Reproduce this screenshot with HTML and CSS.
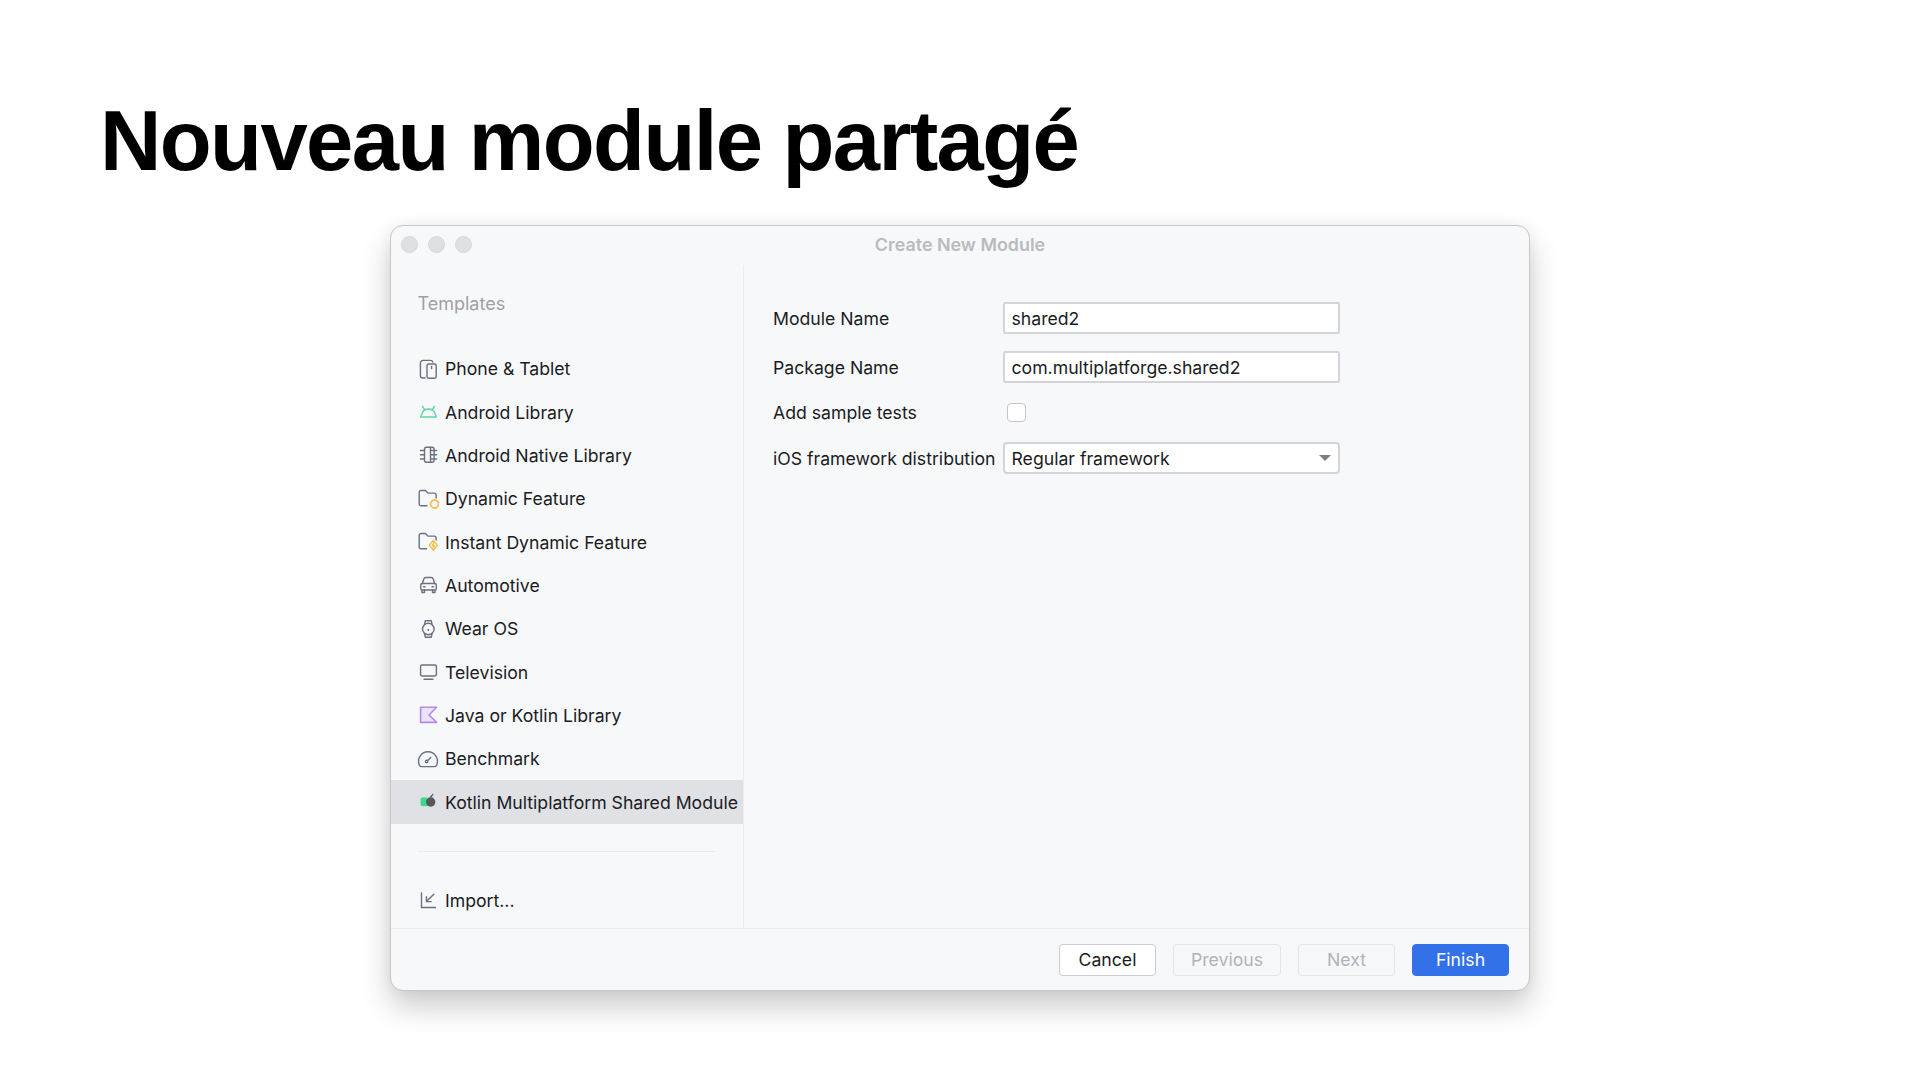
FILE: index.html
```html
<!DOCTYPE html>
<html lang="fr">
<head>
<meta charset="utf-8">
<title>Nouveau module partagé</title>
<link rel="stylesheet" href="styles.css">
</head>
<body>
<h1 class="headline">Nouveau module partagé</h1>
<section class="window">
  <header class="titlebar">
    <div class="lights"><span class="light"></span><span class="light"></span><span class="light"></span></div>
    <div class="window-title">Create New Module</div>
  </header>
  <div class="content">
    <aside class="sidebar">
      <div class="side-heading">Templates</div>
      <ul class="list">
        <li class="item"><svg class="icon" viewBox="0 0 22 22"><path class="st" d="M8 20H6a2.6 2.6 0 0 1-2.6-2.6V5A2.6 2.6 0 0 1 6 2.4h7.5a2.5 2.5 0 0 1 2.3 1.6"/><rect class="st" x="10" y="6" width="9.2" height="14.2" rx="1.6"/><path class="st" d="M14.6 8.5v2"/></svg>Phone &amp; Tablet</li>
        <li class="item"><svg class="icon" viewBox="0 0 22 22"><path class="gr" d="M3.6 16h15.8l-1.2-3a7 7 0 0 0-13.4 0z"/><path class="gr" d="M5.5 5.5l2.6 3.6M17.5 5.5l-2.6 3.6"/></svg>Android Library</li>
        <li class="item"><svg class="icon" viewBox="0 0 22 22"><rect class="st" x="7.5" y="3.2" width="9.6" height="15" rx="2"/><path class="st" d="M3.5 6.5h4M3.5 10.7h4M3.5 15h4M13.5 6.5h6M13.5 10.7h6M13.5 15h6M13.5 3.5v14.5"/></svg>Android Native Library</li>
        <li class="item"><svg class="icon" viewBox="0 0 22 22"><path class="st" d="M10 17.8H4a1.8 1.8 0 0 1-1.8-1.8V4.3A1.8 1.8 0 0 1 4 2.5h4.5l2.4 2.6h6.4a1.8 1.8 0 0 1 1.8 1.8V10"/><circle class="yl dash" cx="17.6" cy="16" r="4"/></svg>Dynamic Feature</li>
        <li class="item"><svg class="icon" viewBox="0 0 22 22"><path class="st" d="M9.5 17.8H4a1.8 1.8 0 0 1-1.8-1.8V4.3A1.8 1.8 0 0 1 4 2.5h4.5l2.4 2.6h6.4a1.8 1.8 0 0 1 1.8 1.8V9"/><path class="yl" d="M16.3 9.5l4 4.6-4 5.2-4-5.2z"/><path class="yl" d="M17 11.5l-1.8 3h2.2l-1.4 2.6"/></svg>Instant Dynamic Feature</li>
        <li class="item"><svg class="icon" viewBox="0 0 22 22"><path class="st" d="M5.4 9.5L6.8 5a2 2 0 0 1 1.9-1.5h5.6A2 2 0 0 1 16.2 5l1.4 4.5"/><rect class="st" x="3.7" y="9.5" width="15.6" height="6.5" rx="1.6"/><path class="st" d="M5 16v2.5h2.5V16M15.5 16v2.5H18V16M6.5 12.7h1.5M15 12.7h1.5"/></svg>Automotive</li>
        <li class="item"><svg class="icon" viewBox="0 0 22 22"><circle class="st" cx="11.3" cy="11" r="5.8"/><path class="st" d="M7.5 6.5L8.3 2.8h6l.8 3.7M7.5 15.5l.8 3.7h6l.8-3.7"/><circle class="fl" cx="11.3" cy="12" r="1"/></svg>Wear OS</li>
        <li class="item"><svg class="icon" viewBox="0 0 22 22"><rect class="st" x="3.6" y="4" width="15.8" height="11" rx="1.4"/><path class="st" d="M7 18.2h9"/></svg>Television</li>
        <li class="item"><svg class="icon" viewBox="0 0 22 22"><path class="pu" d="M3.6 3.2h16l-7.6 7.8 7.6 7.4h-16z"/></svg>Java or Kotlin Library</li>
        <li class="item"><svg class="icon" viewBox="0 0 22 22"><path class="st" d="M4.4 18.6h13.2a2 2 0 0 0 1.7-1A9.4 9.4 0 1 0 2.7 17.6a2 2 0 0 0 1.7 1z"/><circle class="st" cx="9.6" cy="13.4" r="1.2"/><path class="st" d="M10.6 12.4l3.2-3"/></svg>Benchmark</li>
        <li class="item selected"><svg class="icon" viewBox="0 0 22 22"><rect class="kmp-green" x="3.5" y="6.6" width="8" height="8.6" rx="2"/><circle class="kmp-dark" cx="13.7" cy="11" r="4.7"/><path class="kmp-leaf" d="M13.6 6l2.2-2.4"/></svg>Kotlin Multiplatform Shared Module</li>
      </ul>
      <div class="side-rule"></div>
      <div class="item"><svg class="icon" viewBox="0 0 22 22"><path class="st" d="M4.5 4v14.5h14M16.8 5.2L9.4 12.6M9.4 7.8v4.8h4.8"/></svg>Import...</div>
    </aside>
    <main class="form-pane">
      <div class="form">
        <label class="field-label">Module Name</label>
        <div class="field">shared2</div>
        <label class="field-label">Package Name</label>
        <div class="field">com.multiplatforge.shared2</div>
        <label class="field-label">Add sample tests</label>
        <div class="check-row"><span class="checkbox"></span></div>
        <label class="field-label">iOS framework distribution</label>
        <div class="field select">Regular framework<span class="caret"></span></div>
      </div>
    </main>
  </div>
  <footer class="footer">
    <button class="btn">Cancel</button>
    <button class="btn disabled wide">Previous</button>
    <button class="btn disabled">Next</button>
    <button class="btn primary">Finish</button>
  </footer>
</section>
</body>
</html>
```

FILE: styles.css
```css
* { box-sizing: border-box; }
html, body { margin: 0; background: #fff; }
body { width: 1920px; height: 1080px; overflow: hidden; font-family: Inter, "Liberation Sans", sans-serif; color: #1b1c1f; }

.headline {
  margin: 0;
  padding: 92px 0 0 100px;
  height: 225px;
  font: 700 85px/98px "Liberation Sans", Arial, sans-serif;
  letter-spacing: -1.6px;
  word-spacing: -1px;
  color: #000;
}

.window {
  margin-left: 390px;
  width: 1140px;
  height: 766px;
  display: flex;
  flex-direction: column;
  background: #f7f8fa;
  border: 1px solid #c6c8cc;
  border-radius: 13px;
  box-shadow: 0 16px 30px rgba(0, 0, 0, .2), 0 0 14px rgba(0, 0, 0, .05);
}

.titlebar { height: 39px; padding-bottom: 3px; position: relative; display: flex; align-items: center; justify-content: center; }
.lights { position: absolute; left: 10px; top: 10px; display: flex; gap: 10px; }
.light { width: 17px; height: 17px; border-radius: 50%; background: #dfe0e2; border: 1px solid #d6d7da; }
.window-title { font-size: 17.9px; font-weight: 600; color: #b9bbc0; }

.content { flex: 1; display: flex; min-height: 0; }

.sidebar { width: 353px; padding-top: 28px; border-right: 1px solid #ebecf0; font-size: 17.65px; }
.side-heading { height: 22px; line-height: 22px; margin: 0 0 32px 26.5px; font-size: 18px; color: #9fa1a7; }
.list { list-style: none; margin: 0; padding: 0; }
.item { height: 43.35px; display: flex; align-items: center; gap: 6px; padding-left: 26px; white-space: nowrap; }
.selected { background: #dfe1e5; }
.icon { width: 22px; height: 22px; flex: none; }
.side-rule { height: 1px; margin: 27.5px 28px 26.5px 27px; background: #ebecf0; }

.st, .gr, .yl, .pu { fill: none; stroke-width: 1.4; stroke-linejoin: round; stroke-linecap: round; }
.st { stroke: #6c707e; }
.gr { stroke: #5fd9a0; }
.yl { stroke: #f2c04c; }
.dash { stroke-width: 1.8; stroke-dasharray: 2.4 1.2; }
.pu { stroke: #b48af0; fill: #ece3fb; stroke-width: 1.6; }
.fl { fill: #6c707e; }
.kmp-green { fill: #3fd98a; }
.kmp-dark { fill: #55585f; }
.kmp-leaf { fill: none; stroke: #55585f; stroke-width: 1.4; stroke-linecap: round; }

.form-pane { flex: 1; padding: 37px 0 0 29px; }
.form { display: grid; grid-template-columns: 230px 337px; grid-template-rows: 32px 32px 25px 32px; row-gap: 17px; align-items: center; font-size: 17.65px; }
.field-label { white-space: nowrap; }
.check-row { display: flex; align-items: center; }
.field {
  height: 32px;
  display: flex;
  align-items: center;
  padding-left: 6.5px;
  background: #fff;
  border: 2px solid #d3d5db;
  border-radius: 2px;
  white-space: nowrap;
}
.select { position: relative; border-radius: 4px; }
.caret { position: absolute; right: 7px; top: 11px; width: 0; height: 0; border-left: 6px solid transparent; border-right: 6px solid transparent; border-top: 6px solid #7b7e86; }
.checkbox { width: 19px; height: 19px; margin-left: 4px; background: #fff; border: 1.5px solid #c4c6cc; border-radius: 4px; }

.footer { height: 62px; display: flex; align-items: center; justify-content: flex-end; gap: 17px; padding-right: 20px; border-top: 1px solid #ebecf0; }
.btn { width: 97px; height: 32px; padding: 0; font: 400 17.65px Inter, "Liberation Sans", sans-serif; color: #1b1c1f; background: #fff; border: 1.5px solid #c9ccd6; border-radius: 4px; }
.wide { width: 108px; }
.disabled { color: #b0b3ba; background: transparent; border-color: #e3e5e9; }
.primary { color: #fff; background: #3371e8; border-color: #3371e8; }
```
